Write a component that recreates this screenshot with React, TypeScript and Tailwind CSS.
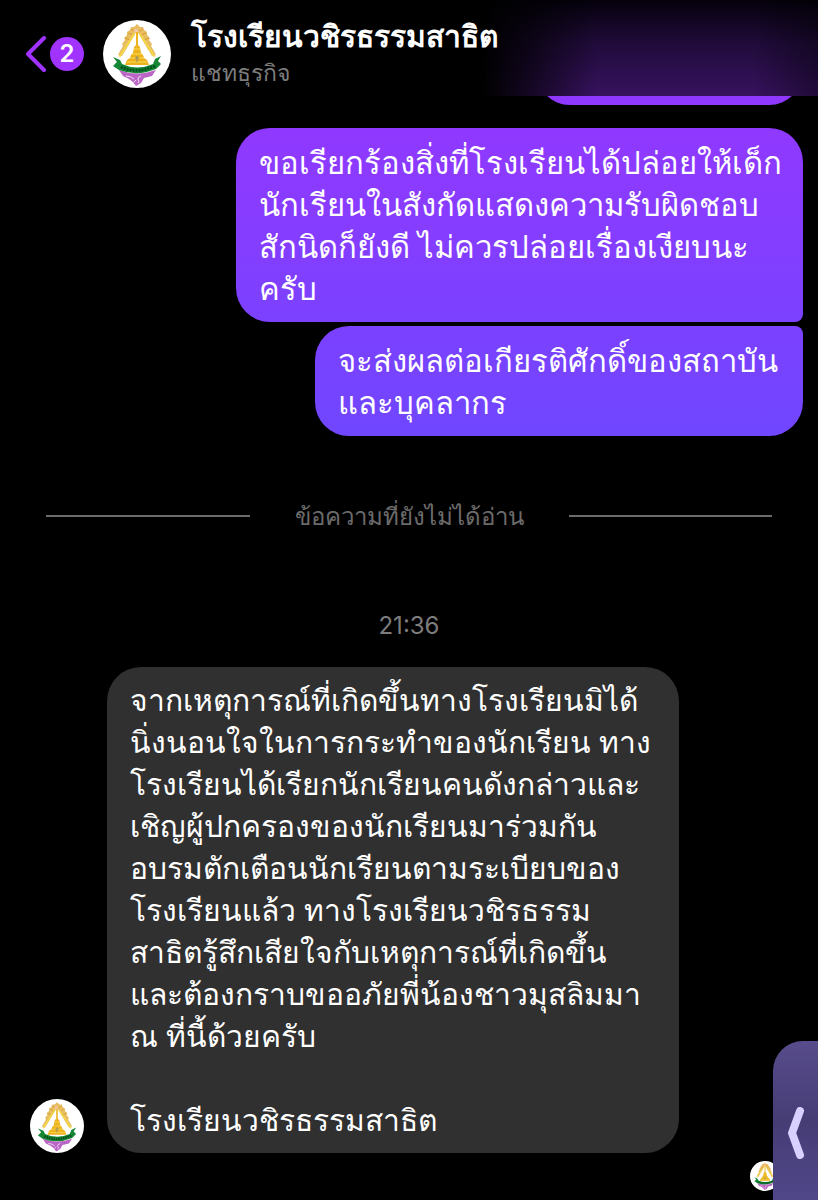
import React from 'react';

interface Message {
  id: string;
  lines: string[];
}

const sentMessages: Message[] = [
  {
    id: 'sent-1',
    lines: [
      'ขอเรียกร้องสิ่งที่โรงเรียนได้ปล่อยให้เด็ก',
      'นักเรียนในสังกัดแสดงความรับผิดชอบ',
      'สักนิดก็ยังดี ไม่ควรปล่อยเรื่องเงียบนะ',
      'ครับ',
    ],
  },
  {
    id: 'sent-2',
    lines: ['จะส่งผลต่อเกียรติศักดิ์ของสถาบัน', 'และบุคลากร'],
  },
];

const replyLines = [
  'จากเหตุการณ์ที่เกิดขึ้นทางโรงเรียนมิได้',
  'นิ่งนอนใจในการกระทำของนักเรียน ทาง',
  'โรงเรียนได้เรียกนักเรียนคนดังกล่าวและ',
  'เชิญผู้ปกครองของนักเรียนมาร่วมกัน',
  'อบรมตักเตือนนักเรียนตามระเบียบของ',
  'โรงเรียนแล้ว ทางโรงเรียนวชิรธรรม',
  'สาธิตรู้สึกเสียใจกับเหตุการณ์ที่เกิดขึ้น',
  'และต้องกราบขออภัยพี่น้องชาวมุสลิมมา',
  'ณ ที่นี้ด้วยครับ',
  '',
  'โรงเรียนวชิรธรรมสาธิต',
];

const SchoolCrest: React.FC<{ className: string }> = ({ className }) => (
  <svg viewBox="0 0 68 68" className={className} role="img" aria-label="ตราโรงเรียน">
    <circle cx="34" cy="34" r="34" fill="#fff" />
    {/* Rays */}
    <path d="M34 4 L37 7 L40 7 L41 10 L44 12 L44 15 L47 18 L46 20 L49 24 L48 26 L51 31 L53 35 L49 36 L44 28 L34 11 L24 28 L19 36 L15 35 L17 31 L20 26 L19 24 L22 20 L21 18 L24 15 L24 12 L27 10 L28 7 L31 7 Z" fill="#e8bd62" />
    <path d="M28 9 L32 11 M25 13 L30 15 M22 18 L27 20 M40 9 L36 11 M43 13 L38 15 M46 18 L41 20" stroke="#d79c34" strokeWidth="1" />
    <path d="M34 12 L18 39 H50 Z" fill="#fff" />
    <path d="M31 14 L17 36 M37 14 L51 36" stroke="#f3d94a" strokeWidth="2" strokeLinecap="round" fill="none" />
    <circle cx="33" cy="11" r="2" fill="#f5c8b5" />
    {/* Chedi */}
    <path d="M33 12 L35 12 L35 25 L37 27 L38 33 L40 35 L41 38 L44 40 L46 45 H22 L24 40 L27 38 L28 35 L30 33 L31 27 L33 25 Z" fill="#edb21c" />
    <path d="M31 29 H37 M29 34 H39 M27 38 H41 M24 42 H44" stroke="#f8dd55" strokeWidth="1" />
    <path d="M34 36 V42 M32 38 H36" stroke="#8f8873" strokeWidth="1" />
    {/* Lotus base */}
    <path d="M16 50 Q34 57 53 50 L49 56 L41 58 L38 63 L33 66 L30 62 L26 59 L20 56 Z" fill="#bb66c6" />
    <path d="M23 56 Q28 56 31 59 M38 56 Q34 57 35 60 Q37 61 35 63 M31 62 L33 60" stroke="#f4e0f6" strokeWidth="1" fill="none" />
    {/* Ribbon */}
    <path d="M10 37 L17 40 L19 44 Q34 51 50 44 L52 39 L58 36 L55 41 L58 44 L53 49 Q34 57 16 50 L10 46 L14 42 Z" fill="#158634" />
    <path d="M18 47 Q34 54 52 46" stroke="#07501e" strokeWidth="3" strokeDasharray="2 1" fill="none" />
  </svg>
);

const MessageText: React.FC<{ lines: string[] }> = ({ lines }) => (
  <p className="leading-[42px] whitespace-pre">{lines.join('\n')}</p>
);

const ChatHeader: React.FC = () => (
  <header className="sticky top-0 z-10 flex h-24 items-center bg-[linear-gradient(to_right,#000_59%,#0009_65%,transparent_73%,transparent_92%,#0006_100%),linear-gradient(to_bottom,#05010c,#200b3a_45%,#37125f)] pt-3 pl-6">
    <button type="button" aria-label="ย้อนกลับ" className="flex items-center gap-1 text-[#a033ff]">
      <svg viewBox="0 0 22 38" className="h-[38px] w-[22px]" fill="none" stroke="currentColor" strokeWidth="4" strokeLinecap="round" strokeLinejoin="round">
        <path d="M20 3 L4 19 L20 35" />
      </svg>
      <span className="flex size-[34px] items-center justify-center rounded-full bg-[#a033ff] font-[Inter,sans-serif] text-2xl font-semibold text-white">2</span>
    </button>
    <SchoolCrest className="ml-[19px] size-[68px]" />
    <div className="ml-5">
      <h1 className="text-[30px] leading-9 font-semibold text-white">โรงเรียนวชิรธรรมสาธิต</h1>
      <p className="text-[23px] leading-9 text-[#7c7c7c]">แชทธุรกิจ</p>
    </div>
  </header>
);

const App: React.FC = () => {
  return (
    <div className="min-h-screen overflow-hidden bg-black font-['Noto_Sans',sans-serif] text-white">
      <ChatHeader />

      <main>
        <section className="flex flex-col items-end gap-1 pr-[15px] text-[31px]">
          {/* Tail of the earlier message, scrolled under the header */}
          <div className="-mt-[101px] mb-[19px] h-[110px] w-[267px] rounded-[34px] bg-[#8f38ff]" />
          {sentMessages.map((message, idx) => (
            <div
              key={message.id}
              className={`px-[23px] py-[13px] ${
                idx === 0
                  ? 'w-[567px] rounded-[34px] rounded-br-lg bg-linear-to-b from-[#9038ff] to-[#7b41ff]'
                  : 'w-[488px] rounded-[34px] rounded-tr-lg bg-linear-to-b from-[#7b41ff] to-[#7046ff]'
              }`}
            >
              <MessageText lines={message.lines} />
            </div>
          ))}
        </section>

        <div className="mx-[46px] mt-15 flex h-10 items-center gap-[45px]">
          <div className="h-[2px] flex-1 bg-[#6b6b6b]" />
          <span className="text-2xl text-[#6b6b6b]">ข้อความที่ยังไม่ได้อ่าน</span>
          <div className="h-[2px] flex-1 bg-[#6b6b6b]" />
        </div>

        <time className="mt-[74px] block text-center font-[Inter,sans-serif] text-2xl leading-8 text-[#7c7c7c]">21:36</time>

        <section className="mt-[25px] flex items-end gap-[23px] pl-[30px]">
          <SchoolCrest className="size-[54px] shrink-0" />
          <div className="w-[572px] rounded-[34px] bg-[#303030] px-[23px] py-3 text-[30px]">
            <MessageText lines={replyLines} />
          </div>
        </section>

        <div className="mt-2 flex justify-end pr-[38px]">
          <SchoolCrest className="size-[30px]" />
        </div>
      </main>

      {/* Edge panel handle */}
      <button
        type="button"
        aria-label="เปิดแผง"
        className="fixed right-0 bottom-0 z-20 flex h-[159px] w-[45px] items-center justify-center rounded-tl-[30px] bg-linear-to-b from-[#584c8c] via-[#463d75] to-[#50478a] pt-6"
      >
        <svg viewBox="0 0 18 52" className="h-[52px] w-[18px]" fill="none" stroke="#d8d0ff" strokeWidth="8" strokeLinecap="round" strokeLinejoin="round">
          <path d="M13 4 L5 26 L13 48" />
        </svg>
      </button>
    </div>
  );
};

export default App;
